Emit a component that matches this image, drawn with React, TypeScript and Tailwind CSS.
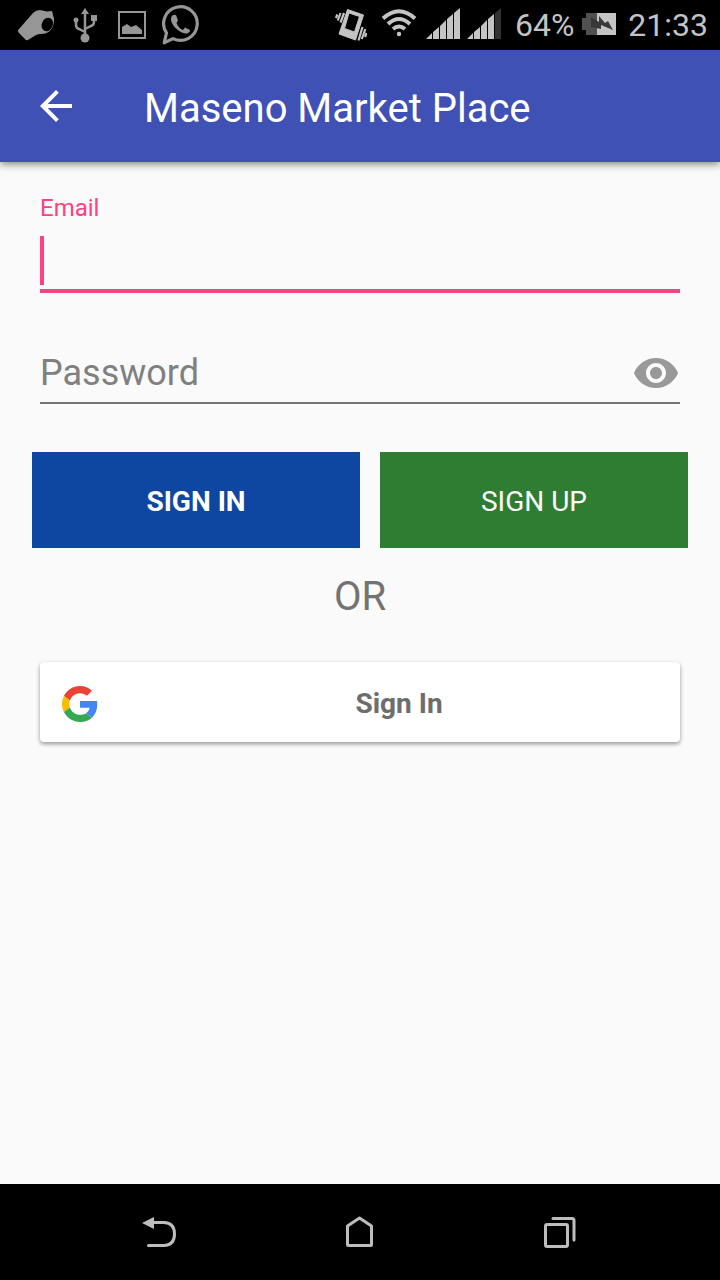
import React, { useState } from 'react';

function StatusBar() {
  return (
    <div className="flex h-[50px] items-center justify-between bg-black pl-4 pr-3 text-[#c4c4c4]">
      <div className="flex items-center gap-4 text-[#969696]">
        {/* Whistle */}
        <svg className="h-10 w-10" viewBox="0 0 40 40">
          <path
            fill="currentColor"
            d="M3 24 17 8Q20 5 24 5L31 6.500 36 6 37 10Q39 15 37 21C35 26 31 29 25 29Q22 29 20 30L12 35Q10 36 8 33L3 28Q1 26 3 24Z"
          />
          <ellipse cx="31.300" cy="19.500" rx="5.500" ry="7" transform="rotate(25 31.300 19.500)" fill="#000000" />
        </svg>
        <svg className="h-10 w-[26px]" viewBox="0 0 26 40" fill="none" stroke="currentColor" strokeWidth="2.500">
          <path d="M13 8V32M4 15V20Q4 23 7 24L13 27M22 13V17Q22 20 19 21L13 24" />
          <path fill="currentColor" stroke="none" d="M13 3 17 9H9ZM19 10H25V16H19Z" />
          <circle cx="4" cy="15" r="2.500" fill="currentColor" stroke="none" />
          <circle cx="13" cy="33" r="4.500" fill="currentColor" stroke="none" />
        </svg>
        <svg className="ml-1 h-10 w-7" viewBox="0 0 28 40" fill="none" stroke="currentColor" strokeWidth="2">
          <path d="M1 7H27V33H1Z" />
          <path fill="currentColor" stroke="none" d="M4 29V22L9 19 13 22 18 20 24 25V29Z" />
        </svg>
        <svg className="h-10 w-10" viewBox="0 0 40 40" fill="none">
          <path
            d="M2.200 37.800 4.500 27.900A16.800 16.800 0 1 1 11 33.600Z"
            stroke="currentColor"
            strokeWidth="3.200"
            strokeLinejoin="round"
          />
          <path
            d="M11 10 14 10 16 15.500 14.500 18C15.500 21 18 24 21 25L23 22.500 28 25Q28.500 27 26 28Q23 29.500 18 26.500C12 23 9 17.500 9 14Q9 11 11 10Z"
            fill="currentColor"
          />
        </svg>
      </div>

      <div className="flex items-center">
        {/* Vibrate */}
        <svg className="h-10 w-8" viewBox="0 0 32 40" fill="none" stroke="currentColor" strokeWidth="2.200">
          <path
            fill="currentColor"
            stroke="currentColor"
            strokeWidth="1"
            strokeLinejoin="round"
            fillRule="evenodd"
            d="M12.500 4.500 28.500 10 20.500 35 4 29ZM14 8 9.500 23.500 19.500 27 24.500 11.500Z"
          />
          <path d="M9 8 5.500 17.500M5.500 8 2.800 15.500M2.300 9.500 1 13M27.500 22 23.500 35.500M30.300 24 26.800 34M31.500 28 30 32" />
        </svg>
        <svg className="ml-3 h-10 w-10" viewBox="0 0 40 40" fill="none" stroke="currentColor" strokeWidth="4">
          <path d="M4 13.500Q20 -1 36 13.500M9 19Q20 9 31 19M14 24Q20 19 26 24" />
          <circle cx="20" cy="29" r="2.200" fill="currentColor" stroke="none" />
        </svg>
        <svg className="ml-[7px] h-10 w-[34px]" viewBox="0 0 34 40" fill="currentColor">
          <path d="M0 34 6 28V34ZM7 27 13 22V34H7ZM14 21 20 15V34H14ZM21 14 27 9V34H21ZM28 8 34 3V34H28Z" />
        </svg>
        <svg className="ml-[7px] h-10 w-[34px]" viewBox="0 0 34 40" fill="currentColor">
          <path d="M0 34 6 28V34ZM7 27 13 22V34H7ZM14 21 20 15V34H14ZM21 14 27 9V34H21Z" />
          <path fill="#333333" d="M28 8 34 3V34H28Z" />
        </svg>
        <span className="ml-[14px] text-[32px] leading-[50px]">64%</span>
        <svg className="ml-2 h-10 w-[34px]" viewBox="0 0 34 40">
          <path fill="#505050" d="M4 8H15V30H4V25H0V13H4Z" />
          <path fill="#c4c4c4" d="M15 8H34V30H15Z" />
          <path fill="#383838" d="M9 12 17 17V11L23 18 26 16 31 25 19 20V24L9 22Z" />
        </svg>
        <span className="ml-3 text-[32px] leading-[50px]">21:33</span>
      </div>
    </div>
  );
}

function GoogleLogo() {
  return (
    <svg className="h-9 w-9" viewBox="0 0 48 48">
      <path
        fill="#EA4335"
        d="M24 9.500c3.540 0 6.710 1.220 9.210 3.600l6.850-6.850C35.900 2.380 30.470 0 24 0 14.620 0 6.510 5.380 2.560 13.220l7.980 6.190C12.430 13.720 17.740 9.500 24 9.500z"
      />
      <path
        fill="#4285F4"
        d="M46.980 24.550c0-1.570-.15-3.090-.38-4.550H24v9.020h12.940c-.58 2.960-2.260 5.480-4.780 7.180l7.730 6c4.510-4.180 7.090-10.360 7.090-17.650z"
      />
      <path
        fill="#FBBC05"
        d="M10.530 28.590c-.48-1.450-.76-2.990-.76-4.590s.27-3.140.76-4.590l-7.980-6.190C.92 16.460 0 20.120 0 24c0 3.880.92 7.540 2.560 10.780l7.970-6.190z"
      />
      <path
        fill="#34A853"
        d="M24 48c6.480 0 11.930-2.130 15.890-5.810l-7.730-6c-2.150 1.450-4.920 2.300-8.160 2.300-6.260 0-11.570-4.220-13.470-9.910l-7.980 6.190C6.510 42.620 14.620 48 24 48z"
      />
    </svg>
  );
}

function SignInForm() {
  const [email, setEmail] = useState('');
  const [password, setPassword] = useState('');
  const [showPassword, setShowPassword] = useState(false);

  return (
    <form className="flex flex-col px-8 pt-[30px]" onSubmit={(e) => e.preventDefault()}>
      {/* Email */}
      <div className="mx-2 flex flex-col">
        <label htmlFor="email" className="text-2xl leading-8 text-[#ff4081]">
          Email
        </label>
        <div className="relative border-b-4 border-[#f5447f]">
          <input
            id="email"
            type="email"
            value={email}
            onChange={(e) => setEmail(e.target.value)}
            className="block h-[65px] w-full bg-transparent text-4xl text-black/85 caret-[#ff4081] outline-none"
          />
          {email === '' && (
            <span className="pointer-events-none absolute bottom-1 left-0 h-[49px] w-1 bg-[#ff4081]" />
          )}
        </div>
      </div>

      {/* Password */}
      <div className="mx-2 mt-[50px] flex items-center border-b-2 border-[#757575]">
        <input
          type={showPassword ? 'text' : 'password'}
          aria-label="Password"
          placeholder="Password"
          value={password}
          onChange={(e) => setPassword(e.target.value)}
          className="h-[59px] min-w-0 flex-1 bg-transparent text-4xl text-black/85 outline-none placeholder:text-[#808080]"
        />
        <button
          type="button"
          aria-label="Show password"
          onClick={() => setShowPassword(!showPassword)}
          className="text-[#999999]"
        >
          <svg className="h-12 w-12" viewBox="0 0 24 24" fill="currentColor">
            <path d="M12 4.500C7 4.500 2.730 7.610 1 12c1.730 4.390 6 7.500 11 7.500s9.270-3.110 11-7.500c-1.730-4.390-6-7.500-11-7.500zM12 17c-2.760 0-5-2.240-5-5s2.240-5 5-5 5 2.240 5 5-2.240 5-5 5zm0-8c-1.660 0-3 1.340-3 3s1.340 3 3 3 3-1.340 3-3-1.340-3-3-3z" />
          </svg>
        </button>
      </div>

      <div className="mt-12 grid grid-cols-[328fr_308fr] gap-5">
        <button type="submit" className="h-24 bg-[#0d47a1] pt-1 text-[28px] font-bold text-white">
          SIGN IN
        </button>
        <button type="button" className="h-24 bg-[#2e7d32] pt-1 text-[28px] text-white">
          SIGN UP
        </button>
      </div>

      <p className="mt-6 text-center text-[40px] leading-[50px] text-[#737373]">OR</p>

      <button
        type="button"
        className="mx-2 mt-10 flex h-20 items-center rounded-sm bg-white pl-[22px] pt-1 shadow-[0_2px_4px_rgba(0,0,0,0.4)]"
      >
        <GoogleLogo />
        <span className="ml-5 flex-1 text-center text-[28px] font-bold text-[#6d6d6d]">Sign In</span>
      </button>
    </form>
  );
}

function NavigationBar() {
  return (
    <nav className="flex h-24 items-center justify-center gap-[152px] bg-black text-[#bdbdbd]">
      <button type="button" aria-label="Back">
        <svg className="h-12 w-12" viewBox="0 0 48 48" fill="none" stroke="currentColor" strokeWidth="3">
          <path d="M16 14.500H28Q38.500 15 38.500 26T28 37.500H12.500" strokeLinecap="round" />
          <path d="M6 15 18 9V21Z" fill="currentColor" stroke="none" />
        </svg>
      </button>
      <button type="button" aria-label="Home">
        <svg className="h-12 w-12" viewBox="0 0 48 48" fill="none" stroke="currentColor" strokeWidth="3">
          <path d="M11.500 18 23.500 10 35.500 18V36.500Q35.500 37.500 34.500 37.500H12.500Q11.500 37.500 11.500 36.500Z" strokeLinejoin="round" />
        </svg>
      </button>
      <button type="button" aria-label="Recent apps">
        <svg className="h-12 w-12" viewBox="0 0 48 48" fill="none" stroke="currentColor" strokeWidth="3">
          <rect x="9.500" y="16.500" width="22" height="22" rx="1.500" />
          <path d="M17 10.500H36Q38 10.500 38 12.500V32" strokeLinecap="round" />
        </svg>
      </button>
    </nav>
  );
}

export default function App() {
  return (
    <div className="flex min-h-screen flex-col bg-[#fafafa] font-[Roboto,sans-serif]">
      <StatusBar />

      <header className="flex h-28 items-center bg-[#3f51b5] pl-8 text-white shadow-[0_2px_8px_rgba(0,0,0,0.5)]">
        <button type="button" aria-label="Back">
          <svg className="h-12 w-12" viewBox="0 0 24 24" fill="currentColor">
            <path d="M20 11H7.830l5.590-5.590L12 4l-8 8 8 8 1.410-1.410L7.830 13H20v-2z" />
          </svg>
        </button>
        <h1 className="ml-16 pt-1.5 text-[40px]">Maseno Market Place</h1>
      </header>

      <main className="flex-1">
        <SignInForm />
      </main>

      <NavigationBar />
    </div>
  );
}
